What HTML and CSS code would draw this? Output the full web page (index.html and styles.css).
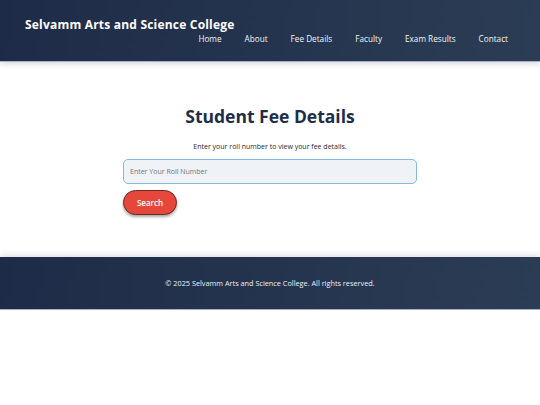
FILE: index.html
```html
<!DOCTYPE html>
<html lang="en">
<head>
<meta charset="utf-8">
<title>Student Fee Details</title>
<link rel="stylesheet" href="styles.css">
</head>
<body>
<header class="site-header">
  <div class="brand">Selvamm Arts and Science College</div>
  <nav class="nav">
    <a href="#">Home</a>
    <a href="#">About</a>
    <a href="#">Fee Details</a>
    <a href="#">Faculty</a>
    <a href="#">Exam Results</a>
    <a href="#">Contact</a>
  </nav>
</header>
<main class="main">
  <section class="fee">
    <h2 class="fee-title">Student Fee Details</h2>
    <p class="fee-sub">Enter your roll number to view your fee details.</p>
    <input class="fee-input" type="text" placeholder="Enter Your Roll Number">
    <button class="fee-btn" type="button">Search</button>
  </section>
</main>
<footer class="site-footer">
  <p>© 2025 Selvamm Arts and Science College. All rights reserved.</p>
</footer>
</body>
</html>
```

FILE: styles.css
```css
* { box-sizing: border-box; }
body {
  margin: 0;
  font-family: "Open Sans", "DejaVu Sans", sans-serif;
  background: #ffffff;
  color: #1f2d47;
}
.site-header {
  height: 62px;
  background: linear-gradient(100deg, #1e2b48 0%, #2b3d54 100%);
  border-bottom: 1px solid #a7b0c4;
  box-shadow: 0 2px 6px rgba(30, 45, 74, 0.18);
  padding: 16px 32px 0 25px;
  display: flex;
  flex-direction: column;
}
.brand {
  color: #ffffff;
  font-weight: 700;
  font-size: 12px;
  line-height: 17px;
  letter-spacing: 0.2px;
}
.nav {
  display: flex;
  justify-content: flex-end;
  gap: 23px;
  margin-top: -1px;
}
.nav a {
  color: #f2f4f8;
  text-decoration: none;
  font-size: 8.2px;
  line-height: 14px;
}
.main {
  height: 195px;
  display: flex;
  justify-content: center;
}
.fee {
  width: 294px;
  display: flex;
  flex-direction: column;
  align-items: flex-start;
  padding-top: 41px;
}
.fee-title {
  align-self: stretch;
  text-align: center;
  margin: 0;
  font-size: 17.5px;
  line-height: 26px;
  font-weight: 700;
  color: #1e2d4a;
}
.fee-sub {
  align-self: stretch;
  text-align: center;
  margin: 13px 0 0;
  font-size: 7px;
  line-height: 10px;
  color: #1f2733;
}
.fee-input {
  margin-top: 7px;
  width: 294px;
  height: 25px;
  border: 1.5px solid #86b9e2;
  border-radius: 5px;
  background: #eff3f7;
  padding: 0 6px;
  font-family: inherit;
  font-size: 7px;
  color: #333;
}
.fee-input::placeholder { color: #6e7680; }
.fee-btn {
  margin-top: 6px;
  width: 54px;
  height: 25px;
  border: 1px solid #6b2a22;
  border-radius: 13px;
  background: #e5483a;
  color: #ffffff;
  font-family: inherit;
  font-size: 8px;
  font-weight: 600;
  box-shadow: 0 2px 3px rgba(0, 0, 0, 0.35);
}
.site-footer {
  height: 53px;
  background: linear-gradient(100deg, #1e2b48 0%, #2b3d54 100%);
  border-bottom: 1px solid #a7b0c4;
  box-shadow: 0 -2px 6px rgba(30, 45, 74, 0.15);
  display: flex;
  align-items: center;
  justify-content: center;
}
.site-footer p {
  margin: 0;
  color: #eef1f5;
  font-size: 7.3px;
}
```
